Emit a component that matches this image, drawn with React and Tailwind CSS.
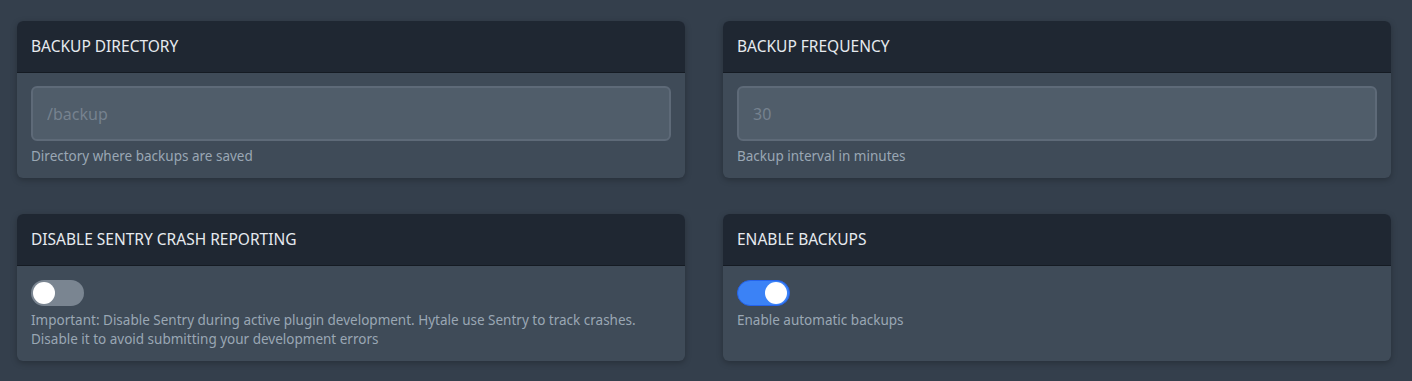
import { useState } from 'react'

function Card({ title, children }) {
  return (
    <div className="rounded-md bg-[#3f4b58] shadow-[0_2px_6px_rgba(0,0,0,0.25)] overflow-hidden">
      <div className="h-[52px] flex items-center px-[14px] bg-[#1f2732] border-b border-[#151b23] text-[15.5px] text-[#e6eaef]">
        {title}
      </div>
      <div className="px-[14px] pt-[13px]">{children}</div>
    </div>
  )
}

function Toggle({ on, onChange }) {
  return (
    <button
      onClick={() => onChange(!on)}
      className={`w-[53px] h-[26px] rounded-full flex items-center px-[2px] ${on ? 'bg-[#3b82f6] border border-[#2563eb] justify-end' : 'bg-[#7a8591] justify-start'}`}
    >
      <span className="w-[22px] h-[22px] rounded-full bg-white block" />
    </button>
  )
}

export default function App() {
  const [dir, setDir] = useState('')
  const [freq, setFreq] = useState('')
  const [sentry, setSentry] = useState(false)
  const [backups, setBackups] = useState(true)

  return (
    <div className="min-h-[381px] bg-[#343f4c] pt-[21px] pl-[17px] pr-[21px] font-['Noto_Sans',sans-serif]">
      <div className="grid grid-cols-2 gap-x-[38px] gap-y-[36px]">
        <Card title="BACKUP DIRECTORY">
          <input
            value={dir}
            onChange={(e) => setDir(e.target.value)}
            placeholder="/backup"
            className="w-full h-[55px] rounded-md bg-[#505d6a] border-2 border-[#5e6a78] px-[14px] text-[16px] text-[#d1d5db] placeholder-[#76828f] outline-none"
          />
          <p className="mt-[6px] pb-[13px] text-[13.5px] leading-[18px] text-[#9aa7b4]">Directory where backups are saved</p>
        </Card>
        <Card title="BACKUP FREQUENCY">
          <input
            value={freq}
            onChange={(e) => setFreq(e.target.value)}
            placeholder="30"
            className="w-full h-[55px] rounded-md bg-[#505d6a] border-2 border-[#5e6a78] px-[14px] text-[16px] text-[#d1d5db] placeholder-[#76828f] outline-none"
          />
          <p className="mt-[6px] pb-[13px] text-[13.5px] leading-[18px] text-[#9aa7b4]">Backup interval in minutes</p>
        </Card>
        <Card title="DISABLE SENTRY CRASH REPORTING">
          <div className="pt-[1px]">
            <Toggle on={sentry} onChange={setSentry} />
          </div>
          <p className="mt-[5px] pb-[12px] text-[13.5px] leading-[19px] text-[#9aa7b4]">
            Important: Disable Sentry during active plugin development. Hytale use Sentry to track crashes.
            <br />
            Disable it to avoid submitting your development errors
          </p>
        </Card>
        <Card title="ENABLE BACKUPS">
          <div className="pt-[1px]">
            <Toggle on={backups} onChange={setBackups} />
          </div>
          <p className="mt-[5px] pb-[12px] text-[13.5px] leading-[19px] text-[#9aa7b4]">Enable automatic backups</p>
        </Card>
      </div>
    </div>
  )
}
